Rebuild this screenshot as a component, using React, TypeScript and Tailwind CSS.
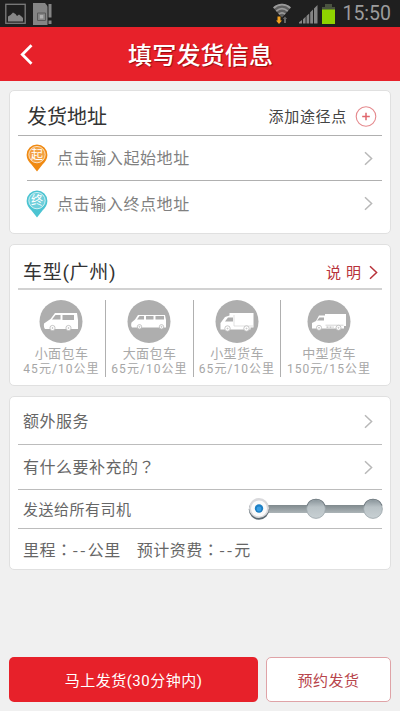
import { useState } from 'react';
import type { ReactNode } from 'react';

type VehicleKind = 'minivan' | 'van' | 'smallTruck' | 'truck';

const VEHICLES: { kind: VehicleKind; name: string; price: string; cell: string }[] = [
  { kind: 'minivan', name: '小面包车', price: '45元/10公里', cell: 'w-[87px]' },
  { kind: 'van', name: '大面包车', price: '65元/10公里', cell: 'w-[88px] border-l' },
  { kind: 'smallTruck', name: '小型货车', price: '65元/10公里', cell: 'w-[87px] border-l' },
  { kind: 'truck', name: '中型货车', price: '150元/15公里', cell: 'w-[97px] border-l' },
];

const STOPS = [11, 68, 125];

function Chevron({ className = 'text-[#b8b8b8]' }: { className?: string }) {
  return (
    <svg className={className} width="9" height="15" viewBox="0 0 9 15" fill="none" stroke="currentColor" strokeWidth="1.5">
      <path d="M1 1.2 7.6 7.5 1 13.8" />
    </svg>
  );
}

function Card({ className, children }: { className: string; children: ReactNode }) {
  return (
    <section className={`mx-[9px] rounded-[5px] border border-[#e0e0e0] bg-white ${className}`}>
      {children}
    </section>
  );
}

function StatusBar() {
  return (
    <div className="flex h-[27px] items-center bg-[#1f1f1f] pl-[5px] pr-[9px]">
      <svg width="21" height="21" viewBox="0 0 21 21">
        <rect x="0.8" y="1.3" width="19.4" height="19" fill="none" stroke="#7c7c7c" strokeWidth="1.3" />
        <path d="M3 18.5v-5L5.500 12 8 9.500l2.500 1.500 1.500 2 2-1.500 2 1.500 2 2v3.500z" fill="#868686" />
      </svg>
      <svg className="ml-[7px]" width="20" height="22" viewBox="0 0 20 22">
        <path d="M0 0h12l4 5v17H0z" fill="#858585" />
        <path d="M4.5 10h8v7.500h-8z" fill="none" stroke="#5a5a5a" />
        <rect x="6.8" y="12" width="3.5" height="3.5" fill="#b0b0b0" />
        <path d="M14.5 0h5v22h-5z" fill="#1f1f1f" />
        <path d="M15.5 1h3v13.500h-3zM15.500 17.500h3V21h-3z" fill="#858585" />
      </svg>
      <svg className="ml-auto" width="18" height="22" viewBox="0 0 18 22">
        <path d="M0 4.5C5.500-.5 12.500-.5 18 4.500L9 14.500z" fill="#5e5e5e" />
        <g fill="none" stroke="#9a9a9a" strokeWidth="1.7">
          <path d="M.7 5C5.500.6 12.500.6 17.300 5" />
          <path d="M3.2 8.200c3.600-3.200 8-3.200 11.600 0" />
          <path d="M5.8 11.200c2-1.700 4.400-1.700 6.400 0" />
        </g>
        <path d="M4.5 13.500h3v4H9l-3 3.500-3-3.500h1.500z" fill="#f3a21f" />
        <path d="M11 20v-4H9.800l2.200-2.500 2.200 2.500H13v4z" fill="#666" />
      </svg>
      <svg className="ml-[8px]" width="19" height="20" viewBox="0 0 19 20" fill="#858585">
        <path d="M0 19.500v-1.200L3 16v3.500zM4 19.500v-4.200l2.600-2.500v6.700zM7.500 19.500V12l2.700-2.600v10.100zM11.200 19.500V8.300l2.800-2.700v13.900zM15 19.500V4.500L18.500 1v18.500z" />
      </svg>
      <svg className="ml-[4px]" width="13" height="20" viewBox="0 0 13 20">
        <path d="M3 0h7v3h3v17H0V3h3z" fill="#4a5340" />
        <path d="M0 5.500h13V20H0z" fill="#8fd400" />
      </svg>
      <span className="ml-[7px] font-[Roboto,sans-serif] text-[19.5px] leading-none text-[#9c9c9c]">15:50</span>
    </div>
  );
}

function Pin({ label, color }: { label: string; color: string }) {
  return (
    <svg className="-ml-px" width="22" height="28" viewBox="0 0 22 28">
      <path d="M11 .5a10.400 10.400 0 0 0-10.400 10.400c0 4 2.200 6.600 4.900 9.700L11 27.500l5.500-6.900c2.700-3.100 4.900-5.700 4.900-9.700A10.400 10.400 0 0 0 11 .5z" fill={color} />
      <circle cx="11" cy="10.6" r="8.2" fill="#fff" fillOpacity="0.2" stroke="#fff" strokeWidth="0.7" />
      <text x="11" y="15" textAnchor="middle" fontSize="12" fill="#fff">{label}</text>
    </svg>
  );
}

function Wheels({ left, right, y, r }: { left: number; right: number; y: number; r: number }) {
  return (
    <g fill="#fff" stroke="#b8b8b8" strokeWidth="0.8">
      <circle cx={left} cy={y} r={r} />
      <circle cx={right} cy={y} r={r} />
      <circle cx={left} cy={y} r={0.5} />
      <circle cx={right} cy={y} r={0.5} />
    </g>
  );
}

function VehicleIcon({ kind }: { kind: VehicleKind }) {
  return (
    <svg className="-ml-px shrink-0" width="44" height="44" viewBox="0 0 44 44">
      <circle cx="22" cy="21.5" r="21.5" fill="#aeaeae" />
      {kind === 'minivan' && (
        <>
          <path d="M5 23.500 11.500 19l4.500-6h22l1 7v9H6c-1-1-1.300-3-1-5.500z" fill="#fff" />
          <path d="M13 19.500l3.500-4.500h5v4.500zM23.500 15H35v5H23.500z" fill="#aeaeae" />
          <Wheels left={13.5} right={29.5} y={28} r={2.6} />
        </>
      )}
      {kind === 'van' && (
        <>
          <path d="M4.500 22.500 8 19.500l3-4.500h27l1 5v7.500H5c-1-1-1-3-.5-5z" fill="#fff" />
          <path d="M10 19.500l2.500-3.500H17v3.500zM19 16h7.500v3.500H19zM28.500 16h8.500v3.500h-8.500z" fill="#aeaeae" />
          <Wheels left={12.5} right={34.5} y={26.8} r={2.2} />
        </>
      )}
      {kind === 'smallTruck' && (
        <>
          <path d="M5.500 29.500V23L10 17l4.500-1.500V13h24v14.500h-3v2z" fill="#fff" />
          <path d="M10 21.500l3-4h5v4z" fill="#aeaeae" />
          <path d="M19 15v11h19" fill="none" stroke="#d4d4d4" strokeWidth="0.7" />
          <Wheels left={12.5} right={31.5} y={28.5} r={2.7} />
        </>
      )}
      {kind === 'truck' && (
        <>
          <path d="M5 28.500V23l4-2 3-5.500h6V14h21v12h-2v2.500z" fill="#fff" />
          <path d="M10 20.500l2.500-3H17v3z" fill="#aeaeae" />
          <path d="M18.500 25.200h18" stroke="#c4c4c4" strokeWidth="0.7" />
          <path d="M19.500 27.200h7" stroke="#bbb" strokeWidth="1.2" strokeDasharray="2 1" />
          <Wheels left={12} right={31.5} y={27.8} r={2.5} />
        </>
      )}
    </svg>
  );
}

function DriverSlider() {
  const [active, setActive] = useState(0);

  return (
    <svg className="mr-[-2px]" width="136" height="24" viewBox="0 0 136 24">
      <defs>
        <linearGradient id="track" x1="0" y1="0" x2="0" y2="1">
          <stop offset="0" stopColor="#7f898d" />
          <stop offset="1" stopColor="#acb4b7" />
        </linearGradient>
        <linearGradient id="stop" x1="0" y1="0" x2="0" y2="1">
          <stop offset="0" stopColor="#89949a" />
          <stop offset="0.4" stopColor="#b9c2c6" />
          <stop offset="1" stopColor="#c8d0d3" />
        </linearGradient>
      </defs>
      <rect x="11" y="8" width="114" height="8" fill="url(#track)" />
      {STOPS.map((x, i) =>
        i === active ? (
          <g key={x}>
            <circle cx={x} cy="12.6" r="10.2" fill="#5d6a72" />
            <circle cx={x} cy="11" r="10" fill="#d9d9dc" />
            <circle cx={x} cy="11.5" r="8" fill="#fbfbfb" />
            <circle cx={x} cy="11.5" r="4.2" fill="#1d7fc4" />
            <circle cx={x} cy="12" r="2.4" fill="#3b9fe4" />
          </g>
        ) : (
          <g key={x} className="cursor-pointer" onClick={() => setActive(i)}>
            <circle cx={x} cy="12" r="9.4" fill="url(#stop)" stroke="#9ba5aa" strokeWidth="0.8" />
            <path d={`M${x - 9} 8.5a9.6 9.6 0 0 1 18 0`} fill="none" stroke="#6f7a80" strokeWidth="1.1" />
          </g>
        )
      )}
    </svg>
  );
}

export default function App() {
  return (
    <div className="flex h-[711px] w-[400px] flex-col overflow-hidden whitespace-nowrap bg-[#f0f0f0] font-[Roboto,'Noto_Sans_CJK_SC',sans-serif] text-[#666]">
      <StatusBar />

      {/* Header */}
      <header className="flex h-[54px] items-center bg-[#e7212a] pl-[20px] text-white">
        <svg width="13" height="21" viewBox="0 0 13 21" fill="none" stroke="currentColor" strokeWidth="2.8">
          <path d="M11.500 1.300 2.300 10.500l9.200 9.200" />
        </svg>
        <h1 className="ml-[95px] pt-[3px] text-[24px] font-medium leading-none tracking-[0.2px] [text-shadow:1px_1px_1px_rgba(90,0,0,0.6)]">填写发货信息</h1>
      </header>

      {/* Address */}
      <Card className="mt-[9px] h-[144px] px-[8px]">
        <div className="flex h-[45px] items-center border-b border-[#b0b0b0] pl-[9px] pr-[5px] pt-[7px]">
          <h2 className="text-[20px] leading-none text-[#333]">发货地址</h2>
          <span className="ml-auto pt-[2px] text-[15px] leading-none tracking-[0.7px] text-[#444]">添加途径点</span>
          <svg className="ml-[8px]" width="22" height="22" viewBox="0 0 22 22" fill="none" stroke="#e58a8e">
            <circle cx="11" cy="10.5" r="9.8" strokeWidth="1.1" />
            <path d="M7.200 10.500h7.600M11 6.700v7.600" stroke="#e0666c" strokeWidth="1.5" />
          </svg>
        </div>
        <div className="ml-[9px] flex h-[45px] items-center border-b border-[#b0b0b0] pr-[9px]">
          <Pin label="起" color="#f08a12" />
          <span className="ml-[9px] pt-px text-[16px] leading-none tracking-[0.6px] text-[#808080]">点击输入起始地址</span>
          <Chevron className="ml-auto text-[#b8b8b8]" />
        </div>
        <div className="ml-[9px] flex h-[45px] items-center pr-[9px]">
          <Pin label="终" color="#4cc4d2" />
          <span className="ml-[9px] pt-[2px] text-[16px] leading-none tracking-[0.6px] text-[#808080]">点击输入终点地址</span>
          <Chevron className="ml-auto text-[#b8b8b8]" />
        </div>
      </Card>

      {/* Vehicle type */}
      <Card className="mt-[10px] h-[142px] px-[8px]">
        <div className="flex h-[45px] items-center border-b-2 border-[#d2d2d2] pl-[5px] pr-[4px] pt-[11px]">
          <h2 className="text-[19px] leading-none tracking-[0.7px] text-[#333]">车型(广州)</h2>
          <span className="ml-auto pt-[2px] text-[15px] leading-none tracking-[5px] text-[#b8323a]">说明</span>
          <Chevron className="ml-[3px] text-[#b8323a]" />
        </div>
        <div className="mt-[10px] flex">
          {VEHICLES.map((v) => (
            <div key={v.kind} className={`flex h-[77px] flex-col items-center border-[#b0b0b0] ${v.cell}`}>
              <VehicleIcon kind={v.kind} />
              <span className="mt-[3px] text-[13px] leading-[13px] tracking-[0.4px] text-[#aaa]">{v.name}</span>
              <span className="mt-[3px] text-[12px] leading-[13px] tracking-[1.05px] text-[#a6a6a6]">{v.price}</span>
            </div>
          ))}
        </div>
      </Card>

      {/* Options */}
      <Card className="mt-[10px] h-[174px] px-[8px] text-[16px] leading-none tracking-[0.5px]">
        <div className="flex h-[48px] items-center justify-between border-b border-[#bcbcbc] pl-[5px] pr-[9px] pt-[2px]">
          <span>额外服务</span>
          <Chevron />
        </div>
        <div className="flex h-[45px] items-center justify-between border-b border-[#bcbcbc] pl-[5px] pr-[9px]">
          <span className="pb-px">有什么要补充的<span className="font-['Noto_Sans_CJK_TC',sans-serif]">？</span></span>
          <Chevron />
        </div>
        <div className="flex h-[39px] items-center justify-between border-b border-[#bcbcbc] pl-[5px]">
          <span className="pt-[3px] text-[15px]">发送给所有司机</span>
          <DriverSlider />
        </div>
        <div className="flex h-[40px] items-center pl-[5px] pt-[2px]">
          <span>里程<span className="font-['Noto_Sans_CJK_TC',sans-serif]">：</span><span className="font-['Noto_Sans_CJK_SC',sans-serif] tracking-[2px]">--</span>公里</span>
          <span className="ml-[16px]">预计资费<span className="font-['Noto_Sans_CJK_TC',sans-serif]">：</span><span className="font-['Noto_Sans_CJK_SC',sans-serif] tracking-[2px]">--</span>元</span>
        </div>
      </Card>

      {/* Actions */}
      <div className="mb-[9px] mt-auto flex gap-[8px] px-[9px] text-[15px] leading-none tracking-[0.5px]">
        <button className="h-[45px] w-[249px] rounded-[5px] bg-[#e7212a] pt-[3px] text-white">马上发货(30分钟内)</button>
        <button className="h-[45px] w-[125px] rounded-[5px] border border-[#dfa3a7] bg-white pt-[3px] text-[#b8454c]">预约发货</button>
      </div>
    </div>
  );
}
